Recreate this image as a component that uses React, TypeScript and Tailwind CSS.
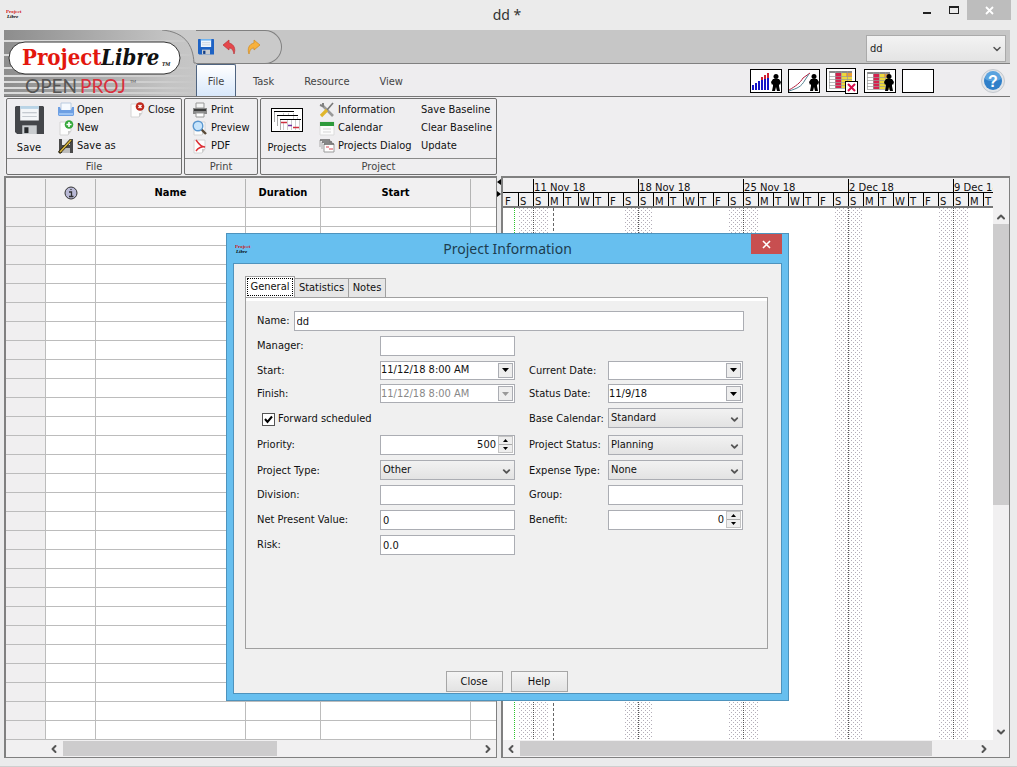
import { useState, type ReactNode } from "react";
import { ChevronDown, ChevronLeft, ChevronRight, ChevronUp } from "lucide-react";

const tabs = ["File", "Task", "Resource", "View"];
const weeks = ["11 Nov 18", "18 Nov 18", "25 Nov 18", "2 Dec 18", "9 Dec 18"];
const days = "FSSMTWTFSSMTWTFSSMTWTFSSMTWTFSSMT".split("");
const rows = Array.from({ length: 28 }, (_, i) => i);

function AppIcon() {
  return (
    <svg width="18" height="12" viewBox="0 0 18 12" aria-hidden="true">
      <text x="0" y="5" fontSize="5" fontWeight="bold" fontFamily="Liberation Serif, serif" fill="#d01420">
        Project
      </text>
      <text x="1" y="10" fontSize="5" fontWeight="bold" fontStyle="italic" fontFamily="Liberation Serif, serif">
        Libre
      </text>
    </svg>
  );
}

function TitleBar() {
  return (
    <div className="flex h-[30px] items-start bg-[#ebebeb]">
      <div className="flex w-[148px] pt-2 pl-[6px]">
        <AppIcon />
      </div>
      <h1 className="flex-1 pt-[5px] text-center font-['Noto_Sans',sans-serif] text-sm leading-5 text-[#333]">
        dd *
      </h1>
      <div className="flex w-[151px] justify-end pr-[6px]">
        <button aria-label="Minimize" className="flex h-[20px] w-[27px] items-center justify-center">
          <span className="mt-[5px] h-[2px] w-[8px] bg-[#222]" />
        </button>
        <button aria-label="Maximize" className="flex h-[20px] w-[27px] items-center justify-center">
          <span className="h-[8px] w-[10px] border border-t-2 border-[#222]" />
        </button>
        <button aria-label="Close window" className="flex h-[20px] w-[44px] items-center justify-center bg-[#bdbdbd]">
          <svg width="9" height="9" viewBox="0 0 9 9" stroke="#fff" strokeWidth="1.8">
            <path d="M1 1 8 8M8 1 1 8" />
          </svg>
        </button>
      </div>
    </div>
  );
}

function Logo() {
  return (
    <svg width="192" height="66" viewBox="0 0 192 66" role="img" aria-label="ProjectLibre OpenProj">
      <defs>
        <linearGradient id="logo-bg">
          <stop offset="0" stopColor="#8d8d8d" />
          <stop offset="0.85" stopColor="#c3c3c3" />
          <stop offset="1" stopColor="#c6c6c6" />
        </linearGradient>
        <linearGradient id="logo-stripe">
          <stop offset="0" stopColor="#dcdcdc" />
          <stop offset="0.85" stopColor="#cdcdcd" />
          <stop offset="1" stopColor="#c6c6c6" />
        </linearGradient>
      </defs>
      <rect width="192" height="66" fill="url(#logo-bg)" />
      <g fill="url(#logo-stripe)">
        <rect y="10" width="192" height="2" />
        <rect y="24" width="192" height="2" />
        <rect y="37" width="192" height="2" />
        <rect y="45" width="192" height="2" />
        <rect y="51" width="192" height="2" />
        <rect y="57" width="192" height="2" />
        <rect y="62" width="192" height="2" />
      </g>
      <path d="M158 0C180 2 189 14 190 33H192V0Z" fill="#cacaca" />
      <path d="M158 0C180 2 189 14 190 33H192" fill="none" stroke="#808080" />
      <rect x="5" y="12" width="171" height="32" rx="16" fill="#fff" stroke="#333" />
      <g fontFamily="DejaVu Serif Condensed, DejaVu Serif, serif" fontWeight="bold" fontSize="22">
        <text x="18" y="35" fill="#e3170d">
          Project
        </text>
        <text x="97" y="35" fontStyle="italic" fill="#111">
          Libre
        </text>
        <text x="158" y="36" fontStyle="italic" fontSize="5" fill="#111">
          TM
        </text>
      </g>
      <g fontFamily="Lato, sans-serif" fontSize="19">
        <text x="21" y="63" fill="#555">
          OPEN
        </text>
        <text x="76" y="63" fill="#d9303c">
          PROJ
        </text>
        <text x="126" y="53" fontSize="4" fill="#444">
          TM
        </text>
      </g>
    </svg>
  );
}

function Floppy({ size, blue }: { size: number; blue?: boolean }) {
  return (
    <svg width={size} height={size} viewBox="0 0 28 30" preserveAspectRatio="none">
      <path d="M1 0H27L28 1V29H2L0 27V1Z" fill={blue ? "#1d62c4" : "#44464a"} />
      <path d="M5 0H23V15H5Z" fill={blue ? "#eef6ff" : "#f4f6f8"} />
      <path d="M5 0H23V3H5Z" fill={blue ? "#6fb3ee" : "#b9d4e6"} />
      <path d="M7 7H21M7 11H21" stroke="#b5bcc2" />
      <path d="M7 20H21V29H7Z" fill="#c9cccf" />
      <path d="M9 22H13V28H9Z" fill={blue ? "#123e86" : "#26282b"} />
    </svg>
  );
}

function Person({ x }: { x: number }) {
  return (
    <g transform={`translate(${x} 5)`} fill="#000">
      <circle cx="5" cy="2.5" r="2.5" />
      <path d="M2 5H8L10 8 9 11 8 10 8 12 9 17H6L5 13 4 17H1L2 12V10L1 11 0 8Z" />
    </g>
  );
}

function SheetCells() {
  return (
    <g>
      <path d="M3 3H26V20H3Z" fill="#fff" />
      <path d="M9 3H15V20H9Z" fill="#d6204e" />
      <path d="M15 3H26V20H15Z" fill="#ecd93c" />
      <path d="M20 5H26V9H20Z" fill="#f0a030" />
      <path d="M3 3H26V5H3Z" fill="#8a8a8a" />
      <path d="M3 8.500H26M3 11.500H26M3 14.500H26M3 17.500H26M3 20.500H26M3.500 3V20M9.500 3V20M15.500 3V20M21.500 3V20" stroke="#999" strokeWidth="0.7" />
    </g>
  );
}

function ViewIcon({ children }: { children?: ReactNode }) {
  return (
    <svg width="32" height="24" viewBox="0 0 32 24" className="overflow-visible">
      <rect x="0.5" y="0.5" width="31" height="23" fill="#fff" stroke="#000" />
      {children}
    </svg>
  );
}

function Header() {
  return (
    <header className="flex h-[67px] border-b border-[#777]">
      <Logo />
      <div className="min-w-0 flex-1">
        <div className="flex h-[34px] border-b border-[#808080] bg-[#c6c6c6]">
          <div className="flex h-[34px] w-[86px] items-center gap-[7px] rounded-r-full border border-l-0 border-[#808080] bg-[#cacaca] pl-[2px]">
            <button aria-label="Save">
              <Floppy size={16} blue />
            </button>
            <button aria-label="Undo">
              <svg width="17" height="16" viewBox="0 0 17 16">
                <path d="M2 6 8 1V4C13 5 15 10 13 15 12 11 11 9 8 9V11Z" fill="#e5474b" stroke="#b93338" strokeWidth="0.7" />
              </svg>
            </button>
            <button aria-label="Redo">
              <svg width="17" height="16" viewBox="0 0 17 16">
                <path d="M15 6 9 1V4C4 5 2 10 4 15 5 11 6 9 9 9V11Z" fill="#f8b13c" stroke="#d08a20" strokeWidth="0.7" />
              </svg>
            </button>
          </div>
          <div className="relative mt-[5px] mr-[4px] ml-auto h-[27px] w-[140px]">
            <select
              aria-label="Open project"
              className="h-full w-full appearance-none border border-[#aaa] bg-linear-to-b from-[#f3f3f3] to-[#e4e4e4] pt-[2px] pl-[3px] text-[11px] text-[#222]"
            >
              <option>dd</option>
            </select>
            <ChevronDown size={12} strokeWidth={3} className="pointer-events-none absolute top-[8px] right-[3px] text-[#555]" />
          </div>
        </div>
        <div className="flex h-[32px] items-center bg-[#eeedef]">
          <nav className="flex h-full items-center text-[11px] text-[#444]">
            {tabs.map((tab) =>
              tab === "File" ? (
                <button key={tab} className="mr-1 h-full w-[40px] rounded-t-xs border border-b-0 border-[#4f6480] bg-linear-to-b from-white to-[#d8e8fb] pt-[3px]">
                  {tab}
                </button>
              ) : (
                <button key={tab} className="h-full px-[13px] pt-1 nth-[3]:mx-1">
                  {tab}
                </button>
              ),
            )}
          </nav>
          <div className="ml-auto flex gap-[6px] pt-[2px] pr-[5px]">
            <button aria-label="Histogram">
              <ViewIcon>
                <path d="M3 21V16M6 21V14M9 21V12M12 21V10M15 21V8M18 21V6" stroke="#1414c8" strokeWidth="2" />
                <path d="M12 11V8M15 10V6M18 9V4" stroke="#d02030" strokeWidth="2" />
                <Person x={21} />
              </ViewIcon>
            </button>
            <button aria-label="Charts">
              <ViewIcon>
                <path d="M1 21C8 17 12 14 15 9L22 4" fill="none" stroke="#b02040" />
                <path d="M1 22C10 19 13 18 17 11L21 5" fill="none" stroke="#508090" />
                <Person x={21} />
              </ViewIcon>
            </button>
            <button aria-label="No sub view">
              <svg width="32" height="24" viewBox="0 1 32 24" className="overflow-visible">
                <rect x="0.5" y="0.5" width="29" height="23" fill="#fff" stroke="#000" />
                <SheetCells />
                <rect x="19.5" y="13.5" width="12" height="12" fill="#fff" stroke="#000" />
                <path d="M22 16 29 23M29 16 22 23" stroke="#d6104e" strokeWidth="2" />
              </svg>
            </button>
            <button aria-label="Task usage">
              <ViewIcon>
                <SheetCells />
                <Person x={20} />
              </ViewIcon>
            </button>
            <button aria-label="Empty view">
              <ViewIcon />
            </button>
            <button aria-label="Help contents" className="ml-[41px]">
              <svg width="24" height="24" viewBox="0 0 24 24">
                <circle cx="12" cy="12" r="11.5" fill="#e2e5e9" stroke="#c3c8ce" />
                <circle cx="12" cy="12" r="9" fill="#2f7fc9" />
                <path d="M4 10A8 8 0 0 1 20 10C15 13 9 13 4 10Z" fill="#5aa3df" />
                <text x="12" y="18" textAnchor="middle" fontSize="16" fontWeight="bold" fontFamily="Liberation Sans, sans-serif" fill="#fff">
                  ?
                </text>
              </svg>
            </button>
          </div>
        </div>
      </div>
    </header>
  );
}

function PageIcon({ children }: { children?: ReactNode }) {
  return (
    <svg width="16" height="16" viewBox="0 0 16 16">
      <path d="M2 2H13V11L10 15H2Z" fill="#fdfdfd" stroke="#d4d4d4" />
      <path d="M13 11H10V15Z" fill="#ccc" />
      {children}
    </svg>
  );
}

const icons = {
  open: (
    <svg width="16" height="16" viewBox="0 0 16 16">
      <path d="M3 1H13V9H3Z" fill="#f6fafe" stroke="#b9cbe0" />
      <path d="M0 5H2L3 8H13L14 5H16V13L15 14H1L0 13Z" fill="#6d9fe3" />
      <path d="M1 11H15V13H1Z" fill="#9cc3f3" />
    </svg>
  ),
  new: (
    <PageIcon>
      <circle cx="11" cy="4.5" r="4.3" fill="#35a83a" />
      <path d="M11 2V7M8.500 4.500H13.500" stroke="#fff" strokeWidth="1.6" />
    </PageIcon>
  ),
  saveAs: (
    <svg width="16" height="16" viewBox="0 0 16 16">
      <path d="M1 1H15V15H1Z" fill="#4a4a4a" />
      <path d="M4 1H12V7H4Z" fill="#e7e7e7" />
      <path d="M4 10H12V15H4Z" fill="#bdbdbd" />
      <path d="M1 15 13 2" stroke="#2c2510" strokeWidth="3" />
      <path d="M2 14 13 2" stroke="#d9b53c" strokeWidth="1.600" />
    </svg>
  ),
  close: (
    <PageIcon>
      <circle cx="11" cy="4.5" r="4.3" fill="#c1281c" />
      <path d="M9.500 3 12.500 6M12.500 3 9.500 6" stroke="#fff" strokeWidth="1.400" />
    </PageIcon>
  ),
  print: (
    <svg width="16" height="16" viewBox="0 0 16 16">
      <path d="M4 1H12V6H4Z" fill="#f5f5f5" stroke="#999" />
      <path d="M1 6H15V12H1Z" fill="#8b8b8b" />
      <path d="M2 7H14V9H2Z" fill="#3c3c3c" />
      <path d="M4 11H12V15H4Z" fill="#fff" stroke="#999" />
    </svg>
  ),
  preview: (
    <PageIcon>
      <path d="M9 9 14 14" stroke="#5a4a38" strokeWidth="2.400" />
      <circle cx="6" cy="6" r="4.800" fill="#c7e4fb" stroke="#5a97d0" strokeWidth="1.400" />
    </PageIcon>
  ),
  pdf: (
    <PageIcon>
      <path d="M4 2C6 5 9 9 13 9 10 8 6 10 4 13" fill="none" stroke="#dd2f35" strokeWidth="1.400" />
    </PageIcon>
  ),
  info: (
    <svg width="16" height="16" viewBox="0 0 16 16" fill="none">
      <path d="M3 3 14 14" stroke="#9a9a9a" strokeWidth="2.600" />
      <path d="M1 3 4 4 4 1" stroke="#808080" strokeWidth="2" />
      <path d="M14 1 8 8" stroke="#777" strokeWidth="1.600" />
      <path d="M8 8 2 14" stroke="#e0b62c" strokeWidth="3.200" />
    </svg>
  ),
  calendar: (
    <svg width="16" height="16" viewBox="0 0 16 16">
      <path d="M1 2H15V15H1Z" fill="#fcfcfc" stroke="#dcdcdc" />
      <path d="M1 2H15V6H1Z" fill="#2e9a3b" />
      <path d="M4 9H12M4 12H12" stroke="#d5d5d5" />
    </svg>
  ),
  dialog: (
    <svg width="16" height="14" viewBox="0 0 16 14" fill="none">
      <path d="M1 8V1H11V4M3 10V3H13V6" stroke="#aaa" />
      <path d="M5 5H15V13H5Z" fill="#fff" stroke="#999" />
      <path d="M1 1H11M3 3H13M5 5H15" stroke="#444" />
      <path d="M7 8H10M10 10H14" stroke="#d34250" />
    </svg>
  ),
};

function RibbonButton({ icon, label }: { icon?: ReactNode; label: string }) {
  return (
    <button className="flex h-[18px] items-center gap-[3px] whitespace-nowrap">
      {icon}
      {label}
    </button>
  );
}

function RibbonGroup({ title, children }: { title: string; children: ReactNode }) {
  return (
    <section className="flex flex-col rounded-xs border border-[#6f6f6f]">
      <div className="flex h-[60px] items-start border-b border-[#8a8a8a] pt-[2px]">{children}</div>
      <h2 className="h-[15px] text-center leading-[15px] text-[#444]">{title}</h2>
    </section>
  );
}

function Ribbon() {
  return (
    <div className="flex h-[79px] gap-[2px] bg-[#efeef0] pt-px pb-px pl-[2px] text-[11px] text-[#111]">
      <RibbonGroup title="File">
        <button className="flex h-[56px] w-[44px] flex-col items-center gap-[5px] pt-[5px]">
          <Floppy size={29} />
          Save
        </button>
        <div className="ml-[7px] w-[71px]">
          <RibbonButton icon={icons.open} label="Open" />
          <RibbonButton icon={icons.new} label="New" />
          <RibbonButton icon={icons.saveAs} label="Save as" />
        </div>
        <div className="w-[52px]">
          <RibbonButton icon={icons.close} label="Close" />
        </div>
      </RibbonGroup>
      <RibbonGroup title="Print">
        <div className="w-[72px] pl-[7px]">
          <RibbonButton icon={icons.print} label="Print" />
          <RibbonButton icon={icons.preview} label="Preview" />
          <RibbonButton icon={icons.pdf} label="PDF" />
        </div>
      </RibbonGroup>
      <RibbonGroup title="Project">
        <button className="flex h-[56px] w-[52px] flex-col items-center gap-[8px] pt-[7px]">
          <svg width="32" height="24" viewBox="0 0 32 24" fill="none">
            <rect x="0.5" y="0.5" width="31" height="23" fill="#fff" stroke="#000" />
            <path d="M3.500 14V4M6.500 18V8M9.500 22V12" stroke="#aaa" />
            <path d="M12.500 14V22M16.500 12V22M20.500 12V22M24.500 12V22M28.500 12V22M12.500 5V7M17.500 5V7M22.500 5V11M26.500 9V11" stroke="#ccc" />
            <path d="M3 3.500H23M6 7.500H27M9 11.500H30" stroke="#000" />
            <path d="M10 14.500H16M22 19.500H28" stroke="#d03040" strokeWidth="1.500" />
            <path d="M17 17.500H21" stroke="#7030a0" strokeWidth="1.500" />
          </svg>
          Projects
        </button>
        <div className="ml-[6px] w-[102px]">
          <RibbonButton icon={icons.info} label="Information" />
          <RibbonButton icon={icons.calendar} label="Calendar" />
          <RibbonButton icon={icons.dialog} label="Projects Dialog" />
        </div>
        <div className="w-[75px]">
          <RibbonButton label="Save Baseline" />
          <RibbonButton label="Clear Baseline" />
          <RibbonButton label="Update" />
        </div>
      </RibbonGroup>
    </div>
  );
}

function TaskSheet() {
  return (
    <div className="flex min-w-0 flex-[493] flex-col border-2 border-r border-b border-[#808080] bg-[#f1f0f1]">
      <table className="mt-px w-full table-fixed border-separate border-spacing-0 text-[11px]">
        <colgroup>
          <col className="w-[40px]" />
          <col className="w-[50px]" />
          <col className="w-[150px]" />
          <col className="w-[75px]" />
          <col className="w-[150px]" />
          <col />
        </colgroup>
        <thead>
          <tr className="h-[29px] [&>th]:border-r [&>th]:border-b [&>th]:border-[#b4b4b4] [&>th]:p-0 [&>th]:last:border-r-0">
            <th />
            <th>
              <svg width="14" height="14" viewBox="0 0 14 14" className="mx-auto" role="img" aria-label="Indicators">
                <circle cx="7" cy="7" r="6" fill="#b9b9d6" stroke="#333" />
                <path d="M7 3V4M5 6H7.500V10M5 10.500H9.500" fill="none" stroke="#333" strokeWidth="1.300" />
              </svg>
            </th>
            <th>Name</th>
            <th>Duration</th>
            <th>Start</th>
            <th />
          </tr>
        </thead>
        <tbody>
          {rows.map((row) => (
            <tr
              key={row}
              className="h-[19px] bg-white [&>td]:border-r [&>td]:border-b [&>td]:border-[#bcbcbc] [&>td]:p-0 [&>td:first-child]:bg-[#f0eff0] [&>td:last-child]:border-r-0"
            >
              <td />
              <td />
              <td />
              <td />
              <td />
              <td />
            </tr>
          ))}
        </tbody>
      </table>
      <div className="flex h-[17px] items-center pr-[2px] pl-[42px] text-[#555]">
        <button aria-label="Scroll left" className="flex w-[15px]">
          <ChevronLeft size={12} strokeWidth={4} />
        </button>
        <div className="h-[15px] flex-1">
          <div className="h-full w-[51%] bg-[#cdcccd]" />
        </div>
        <button aria-label="Scroll right" className="flex">
          <ChevronRight size={12} strokeWidth={4} />
        </button>
      </div>
    </div>
  );
}

function GanttBody() {
  return (
    <svg width="100%" height="100%" className="absolute inset-0" aria-hidden="true">
      <defs>
        <pattern id="weekend" width="4" height="4" patternUnits="userSpaceOnUse">
          <path d="M0 0H1V1H0ZM2 2H3V3H2Z" fill="#b3adb8" />
        </pattern>
      </defs>
      {weeks.map((week, i) => (
        <g key={week}>
          <rect x={16 + i * 105} y="0" width="29" height="100%" fill="url(#weekend)" />
          <line x1={30.5 + i * 105} x2={30.5 + i * 105} y1="0" y2="100%" stroke="#555" strokeDasharray="1 1" />
        </g>
      ))}
      <line x1="11.5" x2="11.5" y1="0" y2="100%" stroke="#2bc52b" strokeDasharray="1 1" />
      <line x1="50.5" x2="50.5" y1="0" y2="100%" stroke="#666" strokeDasharray="3 2" />
    </svg>
  );
}

function Gantt() {
  return (
    <div className="flex min-w-0 flex-[509] flex-col border-2 border-r border-b border-[#808080] bg-[#f1f0f1]">
      <div className="flex min-h-0 flex-1">
        <div className="flex min-w-0 flex-1 flex-col">
          <div className="h-[30px] overflow-hidden border-b-2 border-[#777] pt-px font-['DejaVu_Sans',sans-serif] text-[10px] text-[#111]">
            <div className="flex h-[14px] border-b border-black pl-[30px] leading-[17px]">
              {weeks.map((week) => (
                <span key={week} className="w-[105px] shrink-0 border-l border-black whitespace-nowrap">
                  {week}
                </span>
              ))}
            </div>
            <div className="flex h-[13px] leading-[17px]">
              {days.map((day, i) => (
                <span key={i} className="w-[15px] shrink-0 border-l border-black pl-px first:border-transparent">
                  {day}
                </span>
              ))}
            </div>
          </div>
          <div className="relative flex-1 bg-white">
            <GanttBody />
          </div>
        </div>
        <div className="flex w-[16px] flex-col items-center pt-[32px] text-[#555]">
          <button aria-label="Scroll up" className="flex h-[14px] pt-px">
            <ChevronUp size={12} strokeWidth={4} />
          </button>
          <div className="w-full flex-1">
            <div className="h-[56%] bg-[#cdcccd]" />
          </div>
          <button aria-label="Scroll down" className="flex h-[14px]">
            <ChevronDown size={12} strokeWidth={4} />
          </button>
        </div>
      </div>
      <div className="flex h-[17px] items-center pr-[19px] pl-[2px] text-[#555]">
        <button aria-label="Scroll chart left" className="flex w-[15px]">
          <ChevronLeft size={12} strokeWidth={4} />
        </button>
        <div className="h-[15px] flex-1">
          <div className="h-full w-[90%] bg-[#cdcccd]" />
        </div>
        <button aria-label="Scroll chart right" className="flex">
          <ChevronRight size={12} strokeWidth={4} />
        </button>
      </div>
    </div>
  );
}

const box = "w-[135px] border border-[#abadb3] bg-white text-[11px]";

function TextField({ id, value = "" }: { id: string; value?: string }) {
  return <input id={id} defaultValue={value} className={`${box} h-[20px] px-[2px] pt-px`} />;
}

function DateField({ id, value = "", disabled }: { id: string; value?: string; disabled?: boolean }) {
  return (
    <div className={`${box} flex h-[19px] items-center pr-px ${disabled ? "bg-[#f0f0f0] text-[#888]" : ""}`}>
      <input id={id} defaultValue={value} disabled={disabled} className="min-w-0 flex-1 pt-px" />
      <button
        aria-label="Pick date"
        disabled={disabled}
        className={`flex h-[15px] w-[15px] items-center justify-center border border-[#abadb3] bg-[#eee] ${disabled ? "text-[#999]" : "text-black"}`}
      >
        <svg width="7" height="4" viewBox="0 0 7 4" fill="currentColor">
          <path d="M0 0H7L3.500 4Z" />
        </svg>
      </button>
    </div>
  );
}

function SelectField({ id, value }: { id: string; value: string }) {
  return (
    <div className="relative h-[20px] w-[135px]">
      <select
        id={id}
        className="h-full w-full appearance-none border border-[#abadb3] bg-linear-to-b from-[#f2f2f2] to-[#e3e3e3] pt-px pl-[2px] text-[11px]"
      >
        <option>{value}</option>
      </select>
      <ChevronDown size={11} strokeWidth={4} className="pointer-events-none absolute top-[6px] right-[3px] text-[#555]" />
    </div>
  );
}

function SpinField({ id, initial }: { id: string; initial: number }) {
  const [value, setValue] = useState(initial);

  return (
    <div className={`${box} flex h-[20px] items-center pr-px`}>
      <input
        id={id}
        value={value}
        onChange={(e) => setValue(Number(e.target.value) || 0)}
        className="min-w-0 flex-1 pt-[2px] pr-[2px] text-right"
      />
      <div className="flex h-[17px] w-[15px] flex-col border border-[#c4c4c4] bg-[#eee]">
        <button aria-label="Increase" onClick={() => setValue(value + 1)} className="flex flex-1 items-center justify-center border-b border-[#aaa]">
          <svg width="5" height="3" viewBox="0 0 5 3">
            <path d="M0 3H5L2.500 0Z" />
          </svg>
        </button>
        <button aria-label="Decrease" onClick={() => setValue(value - 1)} className="flex flex-1 items-center justify-center">
          <svg width="5" height="3" viewBox="0 0 5 3">
            <path d="M0 0H5L2.500 3Z" />
          </svg>
        </button>
      </div>
    </div>
  );
}

function ProjectDialog() {
  return (
    <div
      role="dialog"
      aria-labelledby="dialog-title"
      className="absolute top-[233px] left-[226px] flex h-[468px] w-[563px] flex-col border border-[#4e93bd] bg-[#67bfef] px-[6px] pb-[6px]"
    >
      <div className="flex h-[29px] items-start">
        <div className="w-[31px] pt-[9px] pl-[2px]">
          <AppIcon />
        </div>
        <h2
          id="dialog-title"
          className="flex-1 pt-[5px] text-center font-['Noto_Sans',sans-serif] text-sm leading-5 text-[#1d3d50]"
        >
          Project Information
        </h2>
        <button aria-label="Close dialog" className="flex h-[20px] w-[31px] items-center justify-center bg-[#c84f50]">
          <svg width="9" height="9" viewBox="0 0 9 9" stroke="#fff" strokeWidth="1.6">
            <path d="M1 1 8 8M8 1 1 8" />
          </svg>
        </button>
      </div>
      <div className="flex flex-1 flex-col border border-[#4e93bd] bg-[#f0f0f0] px-[11px] pt-[12px] text-[11px] text-[#111]">
        <div role="tablist" className="flex h-[21px] items-end">
          <button role="tab" aria-selected="true" className="h-[21px] w-[50px] border border-b-0 border-[#a0a0a0] bg-white p-px">
            <span className="flex h-full items-center justify-center border border-dotted border-black">General</span>
          </button>
          <button role="tab" aria-selected="false" className="h-[19px] w-[54px] border border-b-0 border-l-0 border-[#a0a0a0] bg-[#e6e6e6] pt-px">
            Statistics
          </button>
          <button role="tab" aria-selected="false" className="h-[19px] w-[37px] border border-b-0 border-l-0 border-[#a0a0a0] bg-[#e6e6e6] pt-px">
            Notes
          </button>
        </div>
        <div role="tabpanel" className="mr-[2px] h-[352px] border border-[#a0a0a0]">
          <div className="h-[3px] bg-white" />
          <div className="flex h-[32px] items-center gap-[4px] pt-[8px] pr-[23px] pl-[11px]">
            <label htmlFor="name">Name:</label>
            <input id="name" defaultValue="dd" className="h-[20px] min-w-0 flex-1 border border-[#abadb3] bg-white px-[2px]" />
          </div>
          <div className="grid grid-cols-[123px_149px_79px_135px] grid-rows-[25px_24px_23px_26px_27px_24px_25px_25px_25px] items-center pl-[11px] [&>label]:pt-[2px]">
            <label htmlFor="manager">Manager:</label>
            <TextField id="manager" />
            <span className="col-span-2" />
            <label htmlFor="start">Start:</label>
            <DateField id="start" value="11/12/18 8:00 AM" />
            <label htmlFor="current">Current Date:</label>
            <DateField id="current" />
            <label htmlFor="finish">Finish:</label>
            <DateField id="finish" value="11/12/18 8:00 AM" disabled />
            <label htmlFor="status-date">Status Date:</label>
            <DateField id="status-date" value="11/9/18" />
            <label className="col-span-2 flex items-center gap-[3px] pl-[5px]">
              <span className="relative flex">
                <input type="checkbox" defaultChecked className="peer h-[13px] w-[13px] appearance-none border border-[#555] bg-white" />
                <svg
                  width="13"
                  height="13"
                  viewBox="0 0 13 13"
                  fill="none"
                  stroke="#000"
                  strokeWidth="2"
                  className="pointer-events-none absolute inset-0 opacity-0 peer-checked:opacity-100"
                >
                  <path d="M3 6 5.500 9 10 3.500" />
                </svg>
              </span>
              Forward scheduled
            </label>
            <label htmlFor="base">Base Calendar:</label>
            <SelectField id="base" value="Standard" />
            <label htmlFor="priority">Priority:</label>
            <SpinField id="priority" initial={500} />
            <label htmlFor="project-status">Project Status:</label>
            <SelectField id="project-status" value="Planning" />
            <label htmlFor="type">Project Type:</label>
            <SelectField id="type" value="Other" />
            <label htmlFor="expense">Expense Type:</label>
            <SelectField id="expense" value="None" />
            <label htmlFor="division">Division:</label>
            <TextField id="division" />
            <label htmlFor="group">Group:</label>
            <TextField id="group" />
            <label htmlFor="npv">Net Present Value:</label>
            <TextField id="npv" value="0" />
            <label htmlFor="benefit">Benefit:</label>
            <SpinField id="benefit" initial={0} />
            <label htmlFor="risk">Risk:</label>
            <TextField id="risk" value="0.0" />
          </div>
        </div>
        <div className="mt-[22px] flex justify-center gap-2 pr-[2px]">
          {["Close", "Help"].map((label) => (
            <button key={label} className="h-[21px] w-[57px] border border-[#a6a6a6] bg-linear-to-b from-[#f4f4f4] to-[#e3e3e3] pt-px">
              {label}
            </button>
          ))}
        </div>
      </div>
    </div>
  );
}

export default function App() {
  return (
    <div className="relative min-h-screen border-b border-[#cfcfcf] bg-[#ebebec] font-['DejaVu_Sans_Condensed','DejaVu_Sans',sans-serif]">
      <TitleBar />
      <div className="mr-[7px] ml-[4px]">
        <Header />
        <Ribbon />
        <main className="flex">
          <TaskSheet />
          <div className="flex w-[4px] flex-col gap-[6px] pt-[3px]">
            <svg width="4" height="6" viewBox="0 0 4 6">
              <path d="M4 0V6L0 3Z" />
            </svg>
            <svg width="4" height="6" viewBox="0 0 4 6">
              <path d="M0 0V6L4 3Z" />
            </svg>
          </div>
          <Gantt />
        </main>
      </div>
      <ProjectDialog />
    </div>
  );
}
